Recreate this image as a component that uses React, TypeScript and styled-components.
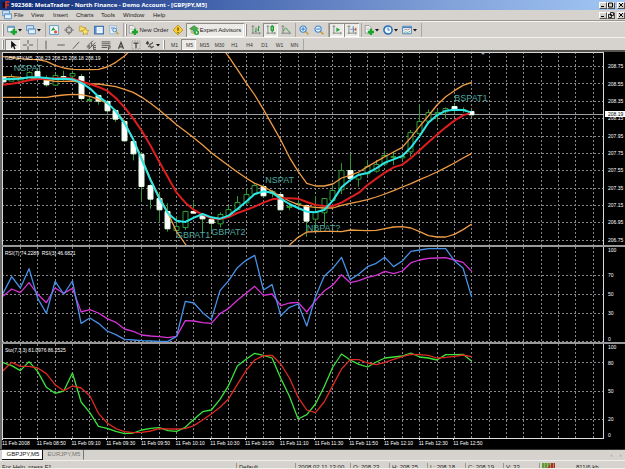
import React from "react";
import styled, { createGlobalStyle } from "styled-components";

const Global = createGlobalStyle`
  * { box-sizing: border-box; }
  html, body { margin: 0; padding: 0; background: #d6d3ce; }
  body { font-family: "Liberation Sans", Arial, sans-serif; font-size: 6px; color: #222; }
  button { font: inherit; color: inherit; margin: 0; padding: 0; background: none; border: 0; }
`;

/* ---------- window frame ---------- */

const Window = styled.div`
  display: flex;
  flex-direction: column;
  width: 100%;
  height: 100vh;
  overflow: hidden;
  background: #d6d3ce;
`;

const TitleBar = styled.header`
  display: flex;
  align-items: center;
  flex: 0 0 10px;
  gap: 1px;
  padding-left: 2px;
  color: #fff;
  background: linear-gradient(90deg, #0d2b74 0%, #4565ae 35%, #7f9fd8 70%, #a3c8f4 100%);
`;

const Title = styled.h1`
  flex: 1;
  margin: 0;
  font-family: "Noto Sans", "Open Sans", sans-serif;
  font-size: 6px;
  line-height: 10px;
  font-weight: bold;
  white-space: nowrap;
`;

const MenuBar = styled.nav`
  display: flex;
  align-items: center;
  flex: 0 0 11px;
  padding-left: 2px;
  border-bottom: 1px solid #9a978f;
`;

const MenuItem = styled.button<{ $width: number }>`
  width: ${(p) => p.$width}px;
  text-align: left;
  line-height: 10px;
  white-space: nowrap;
`;

const MenuIcon = styled.span`
  display: flex;
  width: 12px;
`;

const Spacer = styled.span`
  flex: 1;
`;

const WindowButtons = styled.div`
  display: flex;
  flex: none;
`;

const WindowButton = styled.button<{ $gap?: boolean }>`
  display: flex;
  align-items: center;
  justify-content: center;
  width: 8px;
  height: 7px;
  margin-left: ${(p) => (p.$gap ? 2 : 0)}px;
  background: #d6d3ce;
  border: 1px solid;
  border-color: #fff #55534f #55534f #fff;
`;

/* ---------- toolbars ---------- */

const Toolbar = styled.div<{ $height: number }>`
  display: flex;
  align-items: stretch;
  flex: 0 0 ${(p) => p.$height}px;
  padding: 1px 0 0 1px;
  border-top: 1px solid #f4f3f0;
`;

const Grip = styled.span`
  flex: none;
  width: 2px;
  margin: 1px 1px;
  border-left: 1px solid #fff;
  border-right: 1px solid #8d8a83;
`;

const Divider = styled.span`
  flex: none;
  width: 3px;
  border-right: 1px solid #aaa7a0;
`;

const ToolButton = styled.button<{ $width?: number; $pressed?: boolean }>`
  display: flex;
  align-items: center;
  justify-content: center;
  gap: 1px;
  flex: none;
  width: ${(p) => p.$width ?? 15}px;
  white-space: nowrap;
  background: ${(p) => (p.$pressed ? "#eceae7" : "transparent")};
  box-shadow: ${(p) => (p.$pressed ? "inset 1px 1px 0 #8f8c86, inset -1px -1px 0 #fff" : "none")};
`;

const PeriodButton = styled(ToolButton)`
  padding-left: 2px;
  font-size: 5px;
  color: #333;
`;

/* ---------- charts ---------- */

const ChartArea = styled.main`
  display: grid;
  flex: 1;
  min-height: 0;
  grid-template-columns: minmax(0, 1fr) 21px;
  grid-template-rows: 193fr 2px 95fr 2px 94fr 11px;
  padding-left: 2px;
  border-top: 2px solid #55544f;
  background: linear-gradient(90deg, #6c6a67 2px, #000 2px);
`;

const Plot = styled.section`
  position: relative;
  min-width: 0;
  min-height: 0;
  overflow: hidden;
  background: #000;
`;

const PlotSvg = styled.svg`
  display: block;
  width: 100%;
  height: 100%;

  * { vector-effect: non-scaling-stroke; }
`;

const Scale = styled.div`
  position: relative;
  color: #fff;
  font-size: 5px;
  line-height: 6px;
`;

const ScaleLabel = styled.span<{ $current?: boolean }>`
  position: absolute;
  left: 1px;
  right: 0;
  padding-left: 3px;
  transform: translateY(-50%);
  ${(p) => p.$current && "background: #fff; color: #000; z-index: 1;"}
`;

const Splitter = styled.div`
  grid-column: 1 / -1;
  background: #9a9898;
`;

const Legend = styled.div`
  position: absolute;
  top: 3px;
  left: 3px;
  color: #fff;
  font-size: 5px;
  line-height: 6px;
  white-space: pre;
`;

const Pattern = styled.span`
  position: absolute;
  color: #4fa79f;
  font-size: 9px;
  line-height: 10px;
  transform: translateY(-50%);
`;

const TimeAxis = styled.div`
  display: flex;
  grid-column: 1;
  min-width: 0;
  border-top: 1px solid #ddd;
  color: #fff;
  font-size: 5px;
  line-height: 7px;
`;

const TimeLabel = styled.span`
  flex: 0 0 5.768%;
  white-space: nowrap;

  &::before {
    content: "";
    display: block;
    width: 1px;
    height: 1px;
    background: #fff;
  }
`;

/* ---------- tabs and status ---------- */

const TabStrip = styled.div`
  display: flex;
  flex: 0 0 11px;
  padding-left: 2px;
  background: #d6d3ce;
  border-top: 1px solid #333;
`;

const Tab = styled.button<{ $active?: boolean }>`
  width: 41px;
  padding-left: 2px;
  line-height: 9px;
  color: ${(p) => (p.$active ? "#111" : "#77756f")};
  background: ${(p) => (p.$active ? "#fff" : "transparent")};
  border-right: 1px solid ${(p) => (p.$active ? "#111" : "#77756f")};
  border-bottom: 1px solid ${(p) => (p.$active ? "#111" : "transparent")};
`;

const TabArrow = styled.button`
  width: 9px;
  color: #8a877f;
  line-height: 9px;
`;

const StatusBar = styled.footer`
  display: flex;
  flex: 0 0 9px;
  padding-top: 2px;
  overflow: hidden;
  border-top: 1px solid #efeeeb;
  border-bottom: 1px solid #f3f1ea;
`;

const StatusCell = styled.span<{ $width?: number }>`
  flex: ${(p) => (p.$width ? `0 0 ${p.$width}px` : "1")};
  padding-left: 2px;
  border-right: 1px solid #9a978f;
  line-height: 8px;
  white-space: nowrap;
`;

const StatusBars = styled.span`
  flex: 0 0 36px;
  padding-left: 2px;
`;

const StatusTraffic = styled.span`
  flex: 0 0 49px;
  line-height: 8px;
  white-space: nowrap;
`;

/* ---------- chart data, in plot units ---------- */

const LEFT = 6;
const WIDTH = 1806;
const STEP = 26.04;
const xAt = (i: number) => 9 + STEP * i;
const crisp = (v: number) => Math.floor(v / 3) * 3 + 1.5;

const upperStart = [20, 22, 26, 28, 29, 34, 46, 54, 58, 59, 59, 58, 51, 37, 18, -8];
const upperEnd = [-15, 20, 58, 98, 135, 178, 224, 270, 322, 364, 400, 408, 408, 402, 384, 376, 366, 350, 335, 320, 306, 292, 262, 229, 198, 165, 140, 122, 106, 97];
const middle = [80, 80, 82, 83, 86, 90, 94, 94, 93, 98, 102, 102, 106, 110, 118, 127, 142, 160, 180, 202, 224, 244, 264, 285, 308, 328, 347, 366, 384, 400, 410, 424, 440, 453, 464, 469, 472, 474, 474, 466, 460, 455, 449, 441, 432, 422, 411, 401, 389, 378, 366, 353, 339, 324, 310];
const lowerStart = [142, 142, 142, 142, 142, 142, 138, 135, 133, 134, 139, 148, 160, 182, 216, 268, 325, 388, 440, 488, 545, 582, 620];
const lowerEnd = [585, 562, 546, 545, 544, 544, 545, 540, 541, 542, 541, 536, 531, 530, 534, 545, 557, 561, 561, 553, 539, 522];
const fast = [88, 87, 86, 82, 82, 84, 87, 86, 88, 98, 115, 140, 158, 184, 220, 268, 330, 390, 445, 490, 512, 516, 503, 492, 502, 506, 497, 477, 455, 432, 424, 428, 446, 462, 474, 485, 487, 480, 452, 412, 390, 374, 369, 355, 338, 328, 318, 292, 258, 218, 196, 182, 179, 180, 188];
const slow = [104, 101, 97, 91, 87, 87, 85, 85, 85, 94, 102, 111, 122, 144, 172, 205, 243, 287, 335, 382, 428, 458, 480, 494, 505, 507, 501, 489, 480, 470, 458, 448, 445, 445, 446, 456, 465, 468, 468, 458, 443, 428, 405, 386, 368, 352, 344, 324, 301, 277, 254, 232, 212, 196, 187];

const rsiFast = [148, 98, 132, 74, 163, 208, 112, 150, 111, 238, 222, 238, 261, 272, 286, 288, 290, 291, 292, 292, 277, 172, 177, 206, 227, 140, 110, 71, 49, 34, 138, 122, 215, 190, 180, 246, 158, 97, 73, 40, 107, 90, 68, 58, 40, 68, 51, 22, 18, 14, 14, 14, 50, 72, 160];
const rsiSlow = [157, 135, 146, 116, 151, 176, 132, 148, 133, 204, 197, 207, 224, 235, 255, 262, 273, 276, 278, 281, 277, 230, 231, 236, 238, 209, 193, 169, 148, 127, 154, 150, 185, 177, 175, 204, 170, 141, 123, 92, 116, 110, 100, 94, 82, 89, 81, 56, 48, 43, 42, 41, 48, 55, 82];
const stoMain = [356, 365, 380, 353, 383, 430, 448, 441, 387, 474, 506, 547, 553, 562, 569, 567, 558, 553, 551, 560, 562, 550, 526, 503, 498, 466, 424, 366, 346, 328, 334, 342, 403, 457, 525, 512, 480, 428, 369, 330, 348, 361, 369, 354, 342, 339, 336, 327, 339, 342, 348, 332, 332, 331, 352];
const stoSignal = [380, 355, 367, 367, 372, 389, 422, 440, 426, 432, 455, 508, 537, 554, 563, 566, 565, 561, 554, 555, 555, 554, 545, 528, 510, 490, 464, 421, 380, 348, 335, 334, 360, 402, 460, 498, 506, 474, 424, 375, 347, 347, 357, 362, 355, 346, 338, 331, 332, 334, 342, 340, 337, 333, 338];

/* high, body top, body bottom, low, falling */
type Candle = [number, number, number, number, 0 | 1];
const candles: Candle[] = [
  [78, 80, 96, 98, 1], [72, 78, 92, 92, 0], [80, 84, 92, 96, 0], [64, 68, 92, 94, 0], [60, 64, 82, 86, 1],
  [76, 90, 103, 110, 1], [70, 75, 104, 106, 0], [62, 78, 82, 92, 1], [62, 70, 78, 86, 0], [72, 80, 146, 152, 1],
  [142, 147, 150, 156, 0], [134, 135, 152, 164, 1], [152, 154, 182, 190, 1], [178, 180, 206, 216, 1], [210, 213, 271, 275, 1],
  [270, 274, 311, 331, 1], [308, 314, 410, 455, 1], [402, 405, 446, 476, 1], [430, 444, 478, 518, 1], [460, 484, 536, 545, 1],
  [500, 528, 540, 548, 0], [482, 485, 533, 540, 0], [458, 484, 489, 492, 1], [494, 497, 507, 552, 1], [504, 507, 518, 545, 1],
  [487, 492, 520, 532, 0], [468, 478, 496, 500, 0], [438, 457, 478, 482, 0], [418, 432, 457, 460, 0], [403, 406, 432, 434, 0],
  [406, 410, 438, 442, 1], [420, 424, 430, 442, 0], [430, 432, 478, 480, 1], [458, 469, 472, 480, 0], [450, 460, 463, 475, 0],
  [464, 465, 512, 560, 1], [438, 488, 508, 540, 0], [444, 445, 488, 530, 0], [400, 420, 450, 455, 0], [340, 362, 420, 432, 0],
  [312, 362, 386, 390, 1], [370, 375, 386, 410, 0], [330, 350, 372, 378, 0], [330, 342, 362, 368, 0], [302, 316, 342, 346, 0],
  [305, 319, 322, 345, 0], [310, 318, 322, 332, 0], [240, 247, 305, 320, 0], [162, 214, 250, 256, 0], [178, 188, 214, 220, 0],
  [178, 186, 190, 215, 0], [172, 176, 186, 205, 0], [158, 168, 179, 192, 1], [172, 178, 181, 188, 0], [180, 184, 194, 196, 1],
];

const priceLines = [49, 101, 154, 205, 258, 310, 361, 414, 466, 517, 571];
const prices = ["208.75", "208.55", "208.35", "208.15", "207.95", "207.75", "207.55", "207.35", "207.15", "206.95", "206.75"];
const times = ["2008", "08:50", "09:10", "09:30", "09:50", "10:10", "10:30", "10:50", "11:10", "11:30", "11:50", "12:10", "12:30", "12:50"];

const patterns = [
  { text: "NSPAT", x: 41, y: 53 },
  { text: "GBPAT1", x: 528, y: 556 },
  { text: "GBPAT2", x: 634, y: 546 },
  { text: "NSPAT", x: 796, y: 390 },
  { text: "NBPAT?", x: 920, y: 534 },
  { text: "BSPAT1", x: 1363, y: 143 },
];

function Series({ values, color, from = 0, width = 1.3 }: { values: number[]; color: string; from?: number; width?: number }) {
  const points = values.map((v, i) => `${xAt(from + i)},${v}`).join(" ");
  return <polyline points={points} fill="none" stroke={color} strokeWidth={width} strokeLinejoin="round" />;
}

function Panel({ top, height, lines, label, children }: { top: number; height: number; lines: number[]; label: string; children: React.ReactNode }) {
  const right = LEFT + WIDTH;
  return (
    <PlotSvg viewBox={`${LEFT} ${top} ${WIDTH} ${height}`} preserveAspectRatio="none" role="img" aria-label={label}>
      <g stroke="#85878b" strokeWidth={1} strokeDasharray="2 2">
        {Array.from({ length: 34 }, (_, k) => {
          const x = crisp(xAt(2 + 2 * k));
          return <line key={`v${k}`} x1={x} x2={x} y1={top} y2={top + height} />;
        })}
        {lines.map((y) => (
          <line key={`h${y}`} x1={LEFT} x2={right} y1={crisp(y)} y2={crisp(y)} />
        ))}
      </g>
      {children}
      <g stroke="#d8d8d8" strokeWidth={1}>
        <line x1={LEFT + 1.5} x2={LEFT + 1.5} y1={top} y2={top + height} />
        <line x1={right - 1.5} x2={right - 1.5} y1={top} y2={top + height} />
      </g>
    </PlotSvg>
  );
}

function Candles() {
  return (
    <g stroke="#2f9a35" strokeWidth={1}>
      {candles.map(([high, a, b, low, falling], i) => {
        const x = crisp(xAt(i));
        return (
          <g key={i}>
            <line x1={x} x2={x} y1={high} y2={low} />
            <rect
              x={x - 7.5}
              y={crisp(a)}
              width={15}
              height={Math.max(1, b - a)}
              fill={falling ? "#fff" : "#000"}
              stroke={falling ? "#e4ffe4" : undefined}
            />
          </g>
        );
      })}
    </g>
  );
}

function ScaleColumn({ items, top, height }: { items: { text: string; y: number; current?: boolean }[]; top: number; height: number }) {
  return (
    <Scale>
      {items.map((it) => (
        <ScaleLabel key={it.text} $current={it.current} style={{ top: `${((it.y - top) / height) * 100}%` }}>
          {it.text}
        </ScaleLabel>
      ))}
    </Scale>
  );
}

/* ---------- icons ---------- */

const Icon = styled.svg<{ $size?: number }>`
  display: block;
  flex: none;
  width: ${(p) => p.$size ?? 10}px;
  height: ${(p) => p.$size ?? 10}px;
  fill: none;
`;

const Arrow = () => (
  <Icon $size={4} viewBox="0 0 8 8"><path d="M0 2h8L4 7z" fill="#111" /></Icon>
);
const Plus = () => <path d="M11 6v10M6 11h10" stroke="#17a52b" strokeWidth="4" />;

const NewChartIcon = () => (
  <Icon viewBox="0 0 16 16"><path d="M1 2h11v9H1z" fill="#f5fbff" stroke="#5d91bb" strokeWidth="1.5" /><path d="M1 3.5h11" stroke="#5d91bb" strokeWidth="2" /><Plus /></Icon>
);
const ProfilesIcon = () => (
  <Icon viewBox="0 0 16 16"><path d="M1 1h11v8H1z" fill="#cfe5f7" stroke="#5b8fc4" strokeWidth="1.5" /><path d="M4 6h11v8H4z" fill="#e6f3fd" stroke="#5b8fc4" strokeWidth="1.5" /><path d="M5 7.5h9" stroke="#5b8fc4" /></Icon>
);
const MarketIcon = () => (
  <Icon viewBox="0 0 16 16"><path d="M1 1h14v14H1z" fill="#f4faff" stroke="#5b9bc4" strokeWidth="1.5" /><path d="M3 9l4-6 3 5z" fill="#26a639" /><circle cx="10.500" cy="11" r="2.500" fill="#e2503a" /></Icon>
);
const TargetIcon = () => (
  <Icon viewBox="0 0 16 16"><circle cx="8" cy="8" r="4.500" stroke="#777" strokeWidth="1.800" /><path d="M8 0v6M8 10v6M0 8h6M10 8h6" stroke="#777" strokeWidth="1.500" /></Icon>
);
const NavigatorIcon = () => (
  <Icon viewBox="0 0 16 16"><path d="M1 2h4l1 2h5v6H1z" fill="#f6da68" stroke="#b18f22" /><path d="M10 5l1.800 3.500 4 .5-3 2.600.8 4-3.600-2-3.500 2 .8-4-3-2.600 4-.5z" fill="#ffe873" stroke="#b18f22" /></Icon>
);
const TerminalIcon = () => (
  <Icon viewBox="0 0 16 16"><path d="M1 2h14v12H1z" fill="#f3f9ff" stroke="#3c78b8" strokeWidth="2" /><path d="M2 3h2v10H2z" fill="#3c78b8" /><path d="M6 6h7M6 9h5" stroke="#b9d2ea" /></Icon>
);
const TesterIcon = () => (
  <Icon viewBox="0 0 16 16"><path d="M1 1h11v13H1z" fill="#e3eef8" stroke="#86a8c9" /><path d="M3 4h6M3 6h3" stroke="#6899c7" /><circle cx="9" cy="8" r="3" fill="#d8efff" stroke="#4784bd" strokeWidth="1.500" /><path d="M11 10l4 5" stroke="#c79a32" strokeWidth="2" /></Icon>
);
const OrderIcon = () => (
  <Icon viewBox="0 0 16 16"><path d="M2 1h6l3 3v9H2z" fill="#fafafa" stroke="#777" /><path d="M4 5h4M4 7h4" stroke="#aaa" /><Plus /></Icon>
);
const WarningIcon = () => (
  <Icon viewBox="0 0 16 16"><path d="M8 0l8 8-8 8-8-8z" fill="#f5cc31" stroke="#a98412" /><path d="M8 4v5M8 11v2" stroke="#5c4300" strokeWidth="2" /></Icon>
);
const ExpertIcon = () => (
  <Icon viewBox="0 0 16 16"><path d="M1 6l7-5 7 5-7 3z" fill="#4bab4b" stroke="#2d7b39" /><path d="M3 8v4c2 3 8 3 10 0V8L8 10z" fill="#5aa7de" /><path d="M4 8c0 4 2 5 4 6" stroke="#f0c63b" strokeWidth="2" /><circle cx="12" cy="12" r="4" fill="#1ca838" /><path d="M11 9.500l3 2.500-3 2.500z" fill="#fff" /></Icon>
);
const Axes = () => <path d="M3 1v13M1 13h14M1 3l2-2 2 2M13 11l2 2-2 2" stroke="#68736c" strokeWidth="1.200" />;
const BarsIcon = () => (
  <Icon viewBox="0 0 16 16"><Axes /><path d="M8 4v8M6 10h2M12 2v8M12 3h2M10 8h2" stroke="#27903a" strokeWidth="1.500" /></Icon>
);
const CandleIcon = () => (
  <Icon viewBox="0 0 16 16"><Axes /><path d="M10 0v12" stroke="#138a28" strokeWidth="1.500" /><path d="M8 2h4v7H8z" fill="#68d574" stroke="#138a28" strokeWidth="1.500" /></Icon>
);
const LineIcon = () => (
  <Icon viewBox="0 0 16 16"><Axes /><path d="M4 10c2-7 5-6 6-2l4 3" stroke="#319846" strokeWidth="1.500" /></Icon>
);
const ZoomIcon = ({ plus }: { plus?: boolean }) => (
  <Icon viewBox="0 0 16 16"><path d="M10 10l5 5" stroke="#d19c32" strokeWidth="2.500" /><circle cx="6.500" cy="6.500" r="5" fill="#dff2ff" stroke="#4286cc" strokeWidth="1.800" /><path d={plus ? "M3.500 6.500h6M6.500 3.500v6" : "M3.500 6.500h6"} stroke="#2f73bd" strokeWidth="1.500" /></Icon>
);
const ScrollIcon = () => (
  <Icon viewBox="0 0 16 16"><Axes /><path d="M7 4v7l6-3.500z" fill="#24a33b" /></Icon>
);
const ShiftIcon = () => (
  <Icon viewBox="0 0 16 16"><Axes /><path d="M10 2v10" stroke="#4373a7" strokeWidth="1.500" /><path d="M15 4v6l-4-3z" fill="#ba573a" /><path d="M5 7h4" stroke="#4373a7" /></Icon>
);
const ClockIcon = () => (
  <Icon viewBox="0 0 16 16"><circle cx="8" cy="8" r="6.500" fill="#eff8ff" stroke="#2d6eb8" strokeWidth="2.500" /><path d="M8 4v4h3" stroke="#2d6eb8" strokeWidth="1.500" /></Icon>
);
const TemplateIcon = () => (
  <Icon viewBox="0 0 16 16"><path d="M1 2h14v12H1z" fill="#edf7ff" stroke="#4580b8" strokeWidth="1.500" /><path d="M1 4h14" stroke="#4580b8" strokeWidth="2" /><path d="M3 8l3-1 3 1 4-2" stroke="#cb533c" /><path d="M3 12l3-1 3 1 4-2" stroke="#319846" /></Icon>
);
const PointerIcon = () => (
  <Icon viewBox="0 0 16 16"><path d="M5 1v12l3-3 2 5 2-1-2-5h4z" fill="#111" /></Icon>
);
const lineIcon = (d: string) => () => (
  <Icon viewBox="0 0 16 16"><path d={d} stroke="#555" strokeWidth="1.500" /></Icon>
);
const CrossIcon = lineIcon("M8 0v6M8 10v6M0 8h6M10 8h6");
const VerticalIcon = lineIcon("M8 1v14");
const HorizontalIcon = lineIcon("M2 8h12");
const TrendIcon = lineIcon("M3 14L13 3");
const ChannelIcon = lineIcon("M1 11L11 1M4 15L15 4M2 13l4-4M5 8v6M9 4v7M12 9h4M12 12h4M12 15h4M12 9v6");
const FiboIcon = lineIcon("M1 3h14M1 6h14M1 9h14M1 12h9M12 11v5M12 11h4M12 13h3");
const ArrowsIcon = () => (
  <Icon viewBox="0 0 16 16"><path d="M1 5l3-4 3 4-3 3z" fill="#444" /><path d="M7 8l6-4M5 11l3-2 2 3M9 13l5-3" stroke="#555" strokeWidth="2" /></Icon>
);
const TextIcon = () => (
  <Icon viewBox="0 0 16 16"><path d="M4 14L8 4l4 10M5.500 11h5" stroke="#444" strokeWidth="2" /></Icon>
);
const LabelIcon = () => (
  <Icon viewBox="0 0 16 16"><path d="M1.500 1.500h13v13h-13z" stroke="#777" strokeDasharray="2 2" /><path d="M4 5h8M8 5v8" stroke="#444" strokeWidth="2" /></Icon>
);
const AppIcon = () => (
  <Icon $size={8} viewBox="0 0 16 16"><path d="M1 2h5v12H1z" fill="#151515" /><path d="M8 15V2h7M8 8h6" stroke="#e3312a" strokeWidth="3" /></Icon>
);

const MinimizeGlyph = () => <Icon $size={6} viewBox="0 0 6 6"><path d="M1 4.500h3" stroke="#000" /></Icon>;
const MaximizeGlyph = () => <Icon $size={6} viewBox="0 0 6 6"><path d="M.5 1h4v4h-4z" stroke="#000" /></Icon>;
const RestoreGlyph = () => <Icon $size={6} viewBox="0 0 6 6"><path d="M2.500.5h3v3h-3zM.5 2.500h3v3h-3z" stroke="#000" strokeWidth=".8" /></Icon>;
const CloseGlyph = () => <Icon $size={6} viewBox="0 0 6 6"><path d="M1 1l4 4M5 1L1 5" stroke="#000" /></Icon>;

function Controls({ restore }: { restore?: boolean }) {
  return (
    <WindowButtons>
      <WindowButton aria-label="Minimize"><MinimizeGlyph /></WindowButton>
      <WindowButton aria-label={restore ? "Restore" : "Maximize"}>{restore ? <RestoreGlyph /> : <MaximizeGlyph />}</WindowButton>
      <WindowButton $gap aria-label="Close"><CloseGlyph /></WindowButton>
    </WindowButtons>
  );
}

const menus: [string, number][] = [["File", 17], ["View", 22], ["Insert", 23], ["Charts", 25], ["Tools", 22], ["Window", 30], ["Help", 16]];
const panelTools: [string, React.FC][] = [["Market Watch", MarketIcon], ["Data Window", TargetIcon], ["Navigator", NavigatorIcon], ["Terminal", TerminalIcon], ["Strategy Tester", TesterIcon]];
const drawTools: [string, React.FC][] = [["Vertical line", VerticalIcon], ["Horizontal line", HorizontalIcon], ["Trendline", TrendIcon], ["Channel", ChannelIcon], ["Fibonacci", FiboIcon], ["Text", TextIcon], ["Text label", LabelIcon]];
const periods = ["M1", "M5", "M15", "M30", "H1", "H4", "D1", "W1", "MN"];

export default function App() {
  return (
    <>
      <Global />
      <Window>
        <TitleBar>
          <AppIcon />
          <Title>592368: MetaTrader - North Finance - Demo Account - [GBPJPY,M5]</Title>
          <Controls />
        </TitleBar>
        <MenuBar>
          <MenuIcon><ProfilesIcon /></MenuIcon>
          {menus.map(([name, width]) => (
            <MenuItem key={name} $width={width}>{name}</MenuItem>
          ))}
          <Spacer />
          <Controls restore />
        </MenuBar>

        <Toolbar $height={16}>
          <Grip />
          <ToolButton $width={19} aria-label="New chart"><NewChartIcon /><Arrow /></ToolButton>
          <ToolButton $width={19} aria-label="Profiles"><ProfilesIcon /><Arrow /></ToolButton>
          <Divider />
          {panelTools.map(([name, Glyph]) => (
            <ToolButton key={name} aria-label={name}><Glyph /></ToolButton>
          ))}
          <Divider />
          <Grip />
          <ToolButton $width={41}><OrderIcon />New Order</ToolButton>
          <ToolButton $width={17} aria-label="MetaEditor"><WarningIcon /></ToolButton>
          <ToolButton $width={58} $pressed><ExpertIcon />Expert Advisors</ToolButton>
          <Grip />
          <ToolButton aria-label="Bar chart"><BarsIcon /></ToolButton>
          <ToolButton $pressed aria-label="Candlesticks"><CandleIcon /></ToolButton>
          <ToolButton aria-label="Line chart"><LineIcon /></ToolButton>
          <Divider />
          <ToolButton aria-label="Zoom in"><ZoomIcon plus /></ToolButton>
          <ToolButton aria-label="Zoom out"><ZoomIcon /></ToolButton>
          <Divider />
          <ToolButton $pressed aria-label="Auto scroll"><ScrollIcon /></ToolButton>
          <ToolButton $pressed aria-label="Chart shift"><ShiftIcon /></ToolButton>
          <Divider />
          <ToolButton $width={19} aria-label="Indicators"><OrderIcon /><Arrow /></ToolButton>
          <ToolButton $width={19} aria-label="Periodicity"><ClockIcon /><Arrow /></ToolButton>
          <ToolButton $width={19} aria-label="Templates"><TemplateIcon /><Arrow /></ToolButton>
          <Divider />
        </Toolbar>

        <Toolbar $height={13}>
          <Grip />
          <ToolButton $pressed aria-label="Cursor"><PointerIcon /></ToolButton>
          <ToolButton aria-label="Crosshair"><CrossIcon /></ToolButton>
          <Divider />
          {drawTools.map(([name, Glyph]) => (
            <ToolButton key={name} aria-label={name}><Glyph /></ToolButton>
          ))}
          <ToolButton $width={19} aria-label="Arrows"><ArrowsIcon /><Arrow /></ToolButton>
          <Grip />
          {periods.map((p) => (
            <PeriodButton key={p} $pressed={p === "M5"}>{p}</PeriodButton>
          ))}
          <Divider />
        </Toolbar>

        <ChartArea>
          <Plot>
            <Panel top={6} height={579} lines={priceLines} label="GBPJPY M5 price chart">
              <line x1={LEFT} x2={LEFT + WIDTH} y1={193.5} y2={193.5} stroke="#9a9ca0" />
              <Candles />
              <Series values={upperStart} color="#f09c44" />
              <Series values={upperEnd} from={25} color="#f09c44" />
              <Series values={middle} color="#f09c44" />
              <Series values={lowerStart} color="#f09c44" />
              <Series values={lowerEnd} from={33} color="#f09c44" />
              <Series values={slow} color="#dc1e1e" width={2} />
              <Series values={fast} color="#2fe6e6" width={2} />
              <rect x={1410} y={185} width={10} height={8} fill="#fff" stroke="none" />
              <path d="M1441 7h16l-8 8z" fill="#8698a8" />
              <line x1={LEFT} x2={LEFT + WIDTH} y1={7.5} y2={7.5} stroke="#d8d8d8" />
            </Panel>
            <Legend>GBPJPY,M5  208.23 208.25 208.18 208.19</Legend>
            {patterns.map((p) => (
              <Pattern
                key={`${p.text}${p.x}`}
                style={{ left: `${((p.x - LEFT) / WIDTH) * 100}%`, top: `${((p.y - 6) / 579) * 100}%` }}
              >
                {p.text}
              </Pattern>
            ))}
          </Plot>
          <ScaleColumn
            top={6}
            height={579}
            items={[...prices.map((text, i) => ({ text, y: priceLines[i] })), { text: "208.19", y: 193, current: true }]}
          />
          <Splitter />
          <Plot>
            <Panel top={9} height={285} lines={[94, 151, 208, 292]} label="RSI indicator">
              <Series values={rsiSlow} color="#d633d6" />
              <Series values={rsiFast} color="#4790e6" />
            </Panel>
            <Legend>RSI(7) 74.2289  RSI(3) 46.6821</Legend>
          </Plot>
          <ScaleColumn
            top={9}
            height={285}
            items={[{ text: "100", y: 19 }, { text: "70", y: 94 }, { text: "50", y: 151 }, { text: "30", y: 208 }, { text: "0", y: 284 }]}
          />
          <Splitter />
          <Plot>
            <Panel top={300} height={282} lines={[356, 441, 526]} label="Stochastic oscillator">
              <Series values={stoMain} color="#3ce23c" />
              <Series values={stoSignal} color="#dc2a22" />
            </Panel>
            <Legend>Sto(7,3,3) 81.0976 86.2525</Legend>
          </Plot>
          <ScaleColumn
            top={300}
            height={282}
            items={[{ text: "100", y: 310 }, { text: "80", y: 356 }, { text: "50", y: 441 }, { text: "20", y: 526 }, { text: "0", y: 572 }]}
          />
          <TimeAxis>
            {times.map((t) => (
              <TimeLabel key={t}>11 Feb {t}</TimeLabel>
            ))}
          </TimeAxis>
        </ChartArea>

        <TabStrip>
          <Tab $active>GBPJPY,M5</Tab>
          <Tab>EURJPY,M5</Tab>
          <Spacer />
          <TabArrow aria-label="Previous tab">‹</TabArrow>
          <TabArrow aria-label="Next tab">›</TabArrow>
        </TabStrip>

        <StatusBar>
          <StatusCell>For Help, press F1</StatusCell>
          <StatusCell $width={59}>Default</StatusCell>
          <StatusCell $width={55}>2008.02.11 13:00</StatusCell>
          <StatusCell $width={39}>O: 208.23</StatusCell>
          <StatusCell $width={38}>H: 208.25</StatusCell>
          <StatusCell $width={38}>L: 208.18</StatusCell>
          <StatusCell $width={38}>C: 208.19</StatusCell>
          <StatusCell $width={36}>V: 33</StatusCell>
          <StatusBars>
            <Icon $size={13} viewBox="0 0 13 13">
              <path d="M0 0h9v2H7v2H5v2H0z" fill="#5f9a34" />
              <path d="M9 0h4v6H5V4h2V2h2z" fill="#a8322a" />
              <path d="M2.500 0v6M5.500 0v6M8.500 0v6M11.500 0v6" stroke="#d8c9a0" strokeWidth=".5" />
            </Icon>
          </StatusBars>
          <StatusTraffic>811/6 kb</StatusTraffic>
        </StatusBar>
      </Window>
    </>
  );
}
